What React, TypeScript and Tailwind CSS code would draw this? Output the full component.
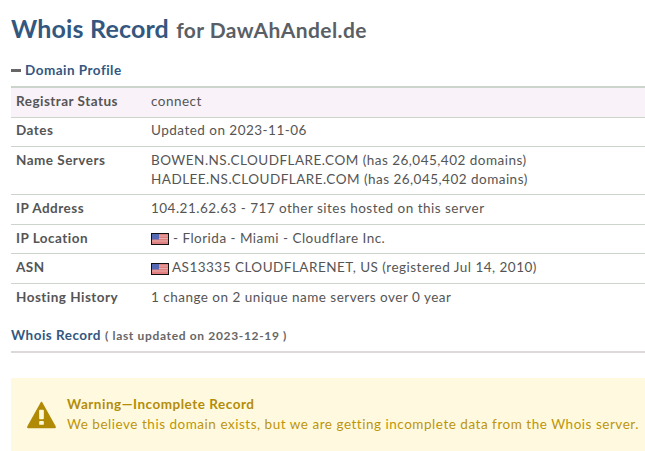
const rows = [
  { label: 'Registrar Status', h: 'h-[30px]', bg: 'bg-[#f9f2f9]', lines: ['connect'] },
  { label: 'Dates', h: 'h-[29px]', bg: '', lines: ['Updated on 2023-11-06'] },
  {
    label: 'Name Servers',
    h: 'h-[48px]',
    bg: '',
    lines: ['BOWEN.NS.CLOUDFLARE.COM (has 26,045,402 domains)', 'HADLEE.NS.CLOUDFLARE.COM (has 26,045,402 domains)'],
  },
  { label: 'IP Address', h: 'h-[30px]', bg: '', lines: ['104.21.62.63 - 717 other sites hosted on this server'] },
];

function Flag() {
  return (
    <svg width="18" height="12" viewBox="0 0 18 12" className="shrink-0">
      <rect width="18" height="12" fill="#111" />
      <rect x="1" y="1" width="16" height="10" fill="#e07f7f" />
      <path d="M1 3h16M1 5.500h16M1 8h16" stroke="#e9aeaa" strokeWidth="1" />
      <rect x="1" y="1" width="7" height="5.500" fill="#5568b4" />
    </svg>
  );
}

export default function App() {
  return (
    <div className="w-[645px] h-[451px] overflow-hidden bg-white pl-[11px] font-['Lato',sans-serif] text-[13.500px] tracking-[0.48px] text-[#555]">
      <h1 className="h-[58px] pt-[10px] text-[25px] leading-[36px] font-bold tracking-[0.17px] text-[#33577f] whitespace-nowrap">
        Whois Record <span className="ml-[1px] text-[21px] text-[#5a5f66] tracking-[0.42px]">for DawAhAndel.de</span>
      </h1>

      <div className="flex h-[28px] items-center pb-[3px] font-bold text-[#33577f]">
        <span className="mr-[4px] h-[3px] w-[10px] bg-[#666]" />
        Domain Profile
      </div>

      <div className="border-t-2 border-[#ccd5cc]">
        {rows.map((r, i) => (
          <div key={r.label} className={`flex border-b border-[#ccd5cc] ${r.h} ${r.bg}`}>
            <div className={`w-[140px] pl-[5px] leading-[16px] font-bold ${i === 1 ? 'pt-[4px]' : 'pt-[5px]'}`}>{r.label}</div>
            <div className={`leading-[19px] whitespace-nowrap ${i === 1 ? 'pt-[3px]' : 'pt-[4px]'}`}>
              {r.lines.map(l => <div key={l}>{l}</div>)}
            </div>
          </div>
        ))}
        <div className="flex h-[29px] border-b border-[#ccd5cc]">
          <div className="w-[140px] pl-[5px] pt-[5px] leading-[16px] font-bold">IP Location</div>
          <div className="flex items-start gap-[4px] pt-[5px] leading-[16px] whitespace-nowrap">
            <span className="mt-[3px]"><Flag /></span>- Florida - Miami - Cloudflare Inc.
          </div>
        </div>
        <div className="flex h-[30px] border-b border-[#ccd5cc]">
          <div className="w-[140px] pl-[5px] pt-[5px] leading-[16px] font-bold">ASN</div>
          <div className="flex items-start gap-[3px] pt-[5px] leading-[16px] whitespace-nowrap">
            <span className="mt-[4px]"><Flag /></span>AS13335 CLOUDFLARENET, US (registered Jul 14, 2010)
          </div>
        </div>
        <div className="flex h-[30px]">
          <div className="w-[140px] pl-[5px] pt-[5px] leading-[16px] font-bold">Hosting History</div>
          <div className="pt-[5px] leading-[16px] whitespace-nowrap">1 change on 2 unique name servers over 0 year</div>
        </div>
      </div>

      <div className="mt-[13px] h-[26px] border-b-2 border-[#dcd8dc] leading-[16px]">
        <span className="font-bold text-[#33577f]">Whois Record</span>
        <span className="ml-[4px] text-[12px] font-bold tracking-[0.66px] text-[#666]">( last updated on 2023-12-19 )</span>
      </div>

      <div className="mt-[25px] flex h-[74px] items-center bg-[#fffadf] pl-[16px]">
        <svg width="29" height="28" viewBox="0 0 31 29" className="shrink-0">
          <path d="M15.500 1 L30 27 Q30.500 28 29 28 H2 Q.500 28 1 27 Z" fill="#b18a05" stroke="#b18a05" strokeLinejoin="round" strokeWidth="1.500" />
          <rect x="13" y="9" width="5" height="10" rx="1" fill="#fff9dc" />
          <rect x="13" y="21" width="5" height="4" rx="1" fill="#fff9dc" />
        </svg>
        <div className="ml-[11px] whitespace-nowrap leading-[19px] tracking-[0.52px] text-[#bd9508]">
          <div className="-mt-[2px] mb-[1px] font-bold text-[#b48d08]">Warning—Incomplete Record</div>
          <div>We believe this domain exists, but we are getting incomplete data from the Whois server.</div>
        </div>
      </div>
    </div>
  );
}
